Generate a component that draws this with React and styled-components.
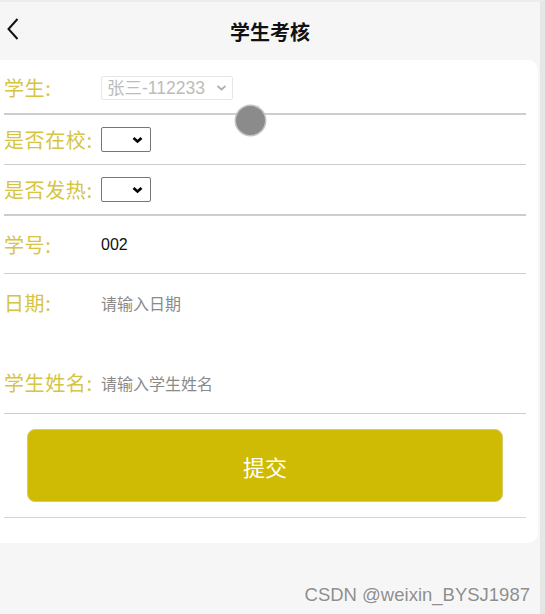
import React from 'react'
import styled, { createGlobalStyle } from 'styled-components'

const GlobalStyle = createGlobalStyle`
    html, body {
        margin: 0;
        padding: 0;
        background: #f6f6f6;
    }
    body {
        font-family: "Noto Sans CJK SC", "Liberation Sans", sans-serif;
    }
`

const Page = styled.div`
    position: relative;
    width: 545px;
    height: 614px;
    border-right: 5px solid #e6e6e6;
    border-top: 2px solid #ececec;
    box-sizing: border-box;
    background: #f6f6f6;
    overflow: hidden;
`

const Header = styled.div`
    height: 58px;
    display: flex;
    align-items: center;
    justify-content: center;
    position: relative;
`

const BackButton = styled.button`
    position: absolute;
    left: 6px;
    top: 14px;
    width: 16px;
    height: 26px;
    padding: 0;
    border: none;
    background: none;
    display: flex;
    align-items: center;
`

const Title = styled.h1`
    margin: 0;
    font-size: 20px;
    font-weight: 700;
    color: #111;
`

const Card = styled.div`
    background: #fff;
    width: 538px;
    height: 483px;
    border-radius: 0 10px 10px 0;
    padding: 2px 12px 0 4px;
    box-sizing: border-box;
`

const Row = styled.div`
    display: flex;
    align-items: ${p => p.$top ? 'flex-start' : 'center'};
    height: ${p => p.$h}px;
    box-sizing: border-box;
    padding-top: ${p => p.$top ? 17 : 0}px;
    border-bottom: ${p => p.$line ? `${p.$line}px solid #cdcdcd` : 'none'};
`

const Label = styled.label`
    width: 97px;
    flex: none;
    font-size: 20px;
    letter-spacing: 0.6px;
    color: #d6c443;
    line-height: 24px;
    white-space: nowrap;
`

const SelectWrap = styled.div`
    position: relative;
    display: inline-flex;
`

const Select = styled.select`
    appearance: none;
    width: ${p => p.$w}px;
    height: ${p => p.$hgt}px;
    box-sizing: border-box;
    border: 1px solid ${p => p.disabled ? '#dcdcdc' : '#767676'};
    border-radius: 2px;
    background: #fff;
    color: #a0a0a0;
    font-family: "Liberation Sans", "Noto Sans CJK SC", sans-serif;
    font-size: 17.5px;
    padding: 0 0 0 5px;
    line-height: 22px;
    outline: none;
`

const Chevron = styled.svg`
    position: absolute;
    right: ${p => p.$r}px;
    top: 50%;
    transform: translateY(-50%);
    pointer-events: none;
`

const Value = styled.span`
    font-size: 16px;
    color: #111;
    font-family: "Liberation Sans", "Noto Sans CJK SC", sans-serif;
`

const Input = styled.input`
    border: none;
    outline: none;
    padding: 0;
    font-size: 16px;
    width: 300px;
    font-family: "Noto Sans CJK SC", "Liberation Sans", sans-serif;
    &::placeholder {
        color: #8a8a8a;
    }
`

const ButtonRow = styled.div`
    padding: 15px 23px;
    border-bottom: 1px solid #d4d4d4;
`

const Submit = styled.button`
    width: 100%;
    height: 73px;
    border: 1px solid #d8cc6a;
    border-radius: 8px;
    background: #cfbb03;
    color: #fff;
    font-size: 22px;
    font-family: "Noto Sans CJK SC", sans-serif;
`

const TouchDot = styled.div`
    position: absolute;
    left: 236px;
    top: 104px;
    width: 29px;
    height: 29px;
    border-radius: 50%;
    background: #8b8b8b;
    box-shadow: 0 0 0 1.5px #c4c4c4;
`

const Watermark = styled.div`
    position: absolute;
    right: 10px;
    bottom: 8px;
    font-family: "Liberation Sans", sans-serif;
    font-size: 18.5px;
    color: #8e8e8e;
    text-shadow: 0 0 2px #fff;
`

function Arrow({ r, color }) {
    const bold = color === '#000'
    return (
        <Chevron $r={r} width="11" height="7" viewBox="0 0 11 7">
            <path d="M1.5 1.5 L5.5 5 L9.5 1.5" fill="none" stroke={color} strokeWidth={bold ? 2.6 : 1.8} />
        </Chevron>
    )
}

export default function App() {
    return (
        <>
            <GlobalStyle />
            <Page>
                <Header>
                    <BackButton aria-label="back">
                        <svg width="14" height="24" viewBox="0 0 14 24">
                            <path d="M11.5 2 L2.5 12 L11.5 22" fill="none" stroke="#111" strokeWidth="2" />
                        </svg>
                    </BackButton>
                    <Title>学生考核</Title>
                </Header>
                <Card>
                    <Row $h={53} $line={2}>
                        <Label>学生:</Label>
                        <SelectWrap>
                            <Select disabled $w={132} $hgt={24} defaultValue="1">
                                <option value="1">张三-112233</option>
                            </Select>
                            <Arrow r={6} color="#b0b0b0" />
                        </SelectWrap>
                    </Row>
                    <Row $h={50} $line={1}>
                        <Label>是否在校:</Label>
                        <SelectWrap>
                            <Select $w={50} $hgt={25}>
                                <option></option>
                            </Select>
                            <Arrow r={8} color="#000" />
                        </SelectWrap>
                    </Row>
                    <Row $h={51} $line={2}>
                        <Label>是否发热:</Label>
                        <SelectWrap>
                            <Select $w={50} $hgt={25}>
                                <option></option>
                            </Select>
                            <Arrow r={8} color="#000" />
                        </SelectWrap>
                    </Row>
                    <Row $h={58} $line={1}>
                        <Label>学号:</Label>
                        <Value>002</Value>
                    </Row>
                    <Row $h={78} $top>
                        <Label>日期:</Label>
                        <Input placeholder="请输入日期" />
                    </Row>
                    <Row $h={62} $line={1}>
                        <Label>学生姓名:</Label>
                        <Input placeholder="请输入学生姓名" />
                    </Row>
                    <ButtonRow>
                        <Submit>提交</Submit>
                    </ButtonRow>
                </Card>
                <TouchDot />
                <Watermark>CSDN @weixin_BYSJ1987</Watermark>
            </Page>
        </>
    )
}
